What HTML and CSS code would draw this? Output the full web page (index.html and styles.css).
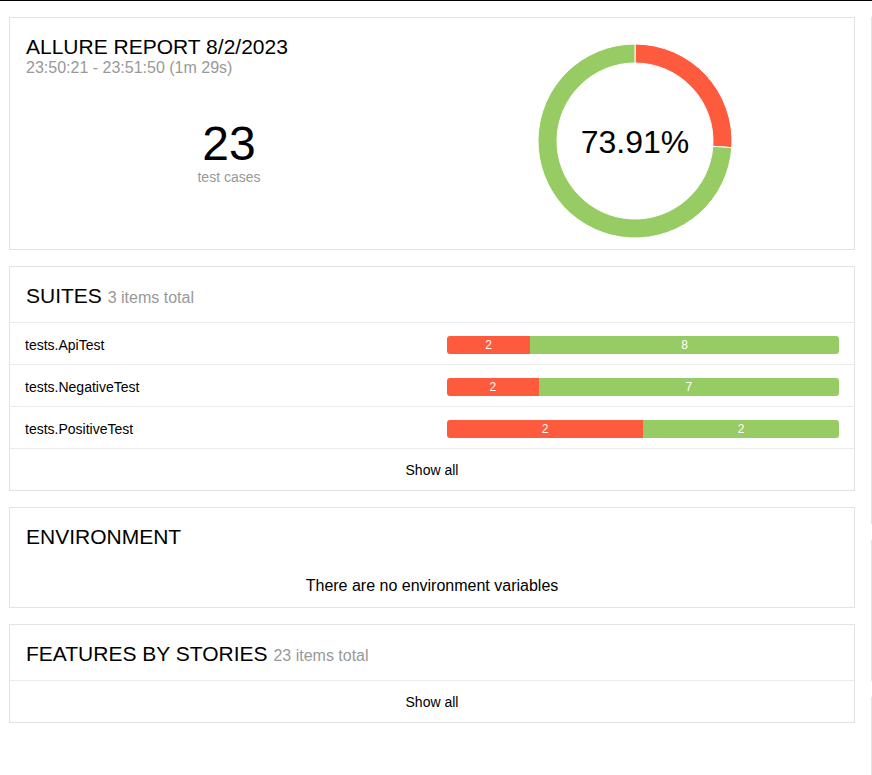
FILE: index.html
```html
<!DOCTYPE html>
<html lang="en">
<head>
<meta charset="utf-8">
<title>Allure Report</title>
<link rel="stylesheet" href="styles.css">
</head>
<body>
<div class="page">
  <div class="columns">
    <div class="column">
      <section class="card summary">
        <div class="summary-left">
          <h1 class="card-title">ALLURE REPORT 8/2/2023</h1>
          <div class="subtitle">23:50:21 - 23:51:50 (1m 29s)</div>
          <div class="stat">
            <div class="stat-num">23</div>
            <div class="stat-label">test cases</div>
          </div>
        </div>
        <div class="summary-right">
          <div class="donut">
            <svg width="194" height="194" viewBox="0 0 194 194">
              <path class="seg-failed" d="M97,0 A97,97 0 0,1 193.774,103.619 L174.818,102.323 A78,78 0 0,0 97,19 Z"/>
              <path class="seg-passed" d="M193.774,103.619 A97,97 0 1,1 97,0 L97,19 A78,78 0 1,0 174.818,102.323 Z"/>
            </svg>
            <div class="donut-label">73.91%</div>
          </div>
        </div>
      </section>

      <section class="card">
        <h2 class="card-title header-line">SUITES <span class="count">3 items total</span></h2>
        <div class="row">
          <div class="row-name">tests.ApiTest</div>
          <div class="bar">
            <div class="bar-seg failed" style="flex-grow:2">2</div>
            <div class="bar-seg passed" style="flex-grow:8">8</div>
          </div>
        </div>
        <div class="row">
          <div class="row-name">tests.NegativeTest</div>
          <div class="bar">
            <div class="bar-seg failed" style="flex-grow:2">2</div>
            <div class="bar-seg passed" style="flex-grow:7">7</div>
          </div>
        </div>
        <div class="row">
          <div class="row-name">tests.PositiveTest</div>
          <div class="bar">
            <div class="bar-seg failed" style="flex-grow:2">2</div>
            <div class="bar-seg passed" style="flex-grow:2">2</div>
          </div>
        </div>
        <div class="show-all">Show all</div>
      </section>

      <section class="card">
        <h2 class="card-title">ENVIRONMENT</h2>
        <div class="empty">There are no environment variables</div>
      </section>

      <section class="card">
        <h2 class="card-title header-line">FEATURES BY STORIES <span class="count">23 items total</span></h2>
        <div class="show-all">Show all</div>
      </section>
    </div>

    <div class="column">
      <section class="card side-a"></section>
      <section class="card side-b"></section>
      <section class="card side-c"></section>
    </div>
  </div>
</div>
</body>
</html>
```

FILE: styles.css
```css
html, body {
  margin: 0;
  padding: 0;
  background: #fff;
  overflow: hidden;
}

body {
  font-family: "Liberation Sans", Arial, sans-serif;
  font-size: 14px;
  color: #000;
}

.page {
  border-top: 1px solid #000;
}

.columns {
  display: flex;
  align-items: flex-start;
  gap: 16px;
  padding: 16px 0 0 9px;
  width: max-content;
}

.column {
  width: 846px;
  flex-shrink: 0;
  display: flex;
  flex-direction: column;
  gap: 16px;
}

.card {
  background: #fff;
  border: 1px solid #e3e3e3;
}

.card-title {
  margin: 0;
  font-size: 21px;
  font-weight: normal;
  line-height: 24px;
  height: 24px;
  padding: 17px 15px 14px 16px;
}

.header-line {
  border-bottom: 1px solid #ebebeb;
}

.count {
  font-size: 16px;
  line-height: 16px;
  color: #999;
}

/* summary */
.summary {
  display: flex;
  padding: 0 16px;
  height: 231px;
}

.summary-left,
.summary-right {
  width: 406px;
}

.summary-left .card-title {
  padding: 17px 0 0 0;
}

.subtitle {
  font-size: 16px;
  line-height: 18px;
  color: #999;
}

.stat {
  margin-top: 43px;
  text-align: center;
}

.stat-num {
  font-size: 48px;
  line-height: 48px;
}

.stat-label {
  font-size: 14px;
  line-height: 16px;
  margin-top: 1px;
  color: #999;
}

.summary-right {
  display: flex;
  justify-content: center;
  padding-top: 26px;
}

.donut {
  position: relative;
  width: 194px;
  height: 194px;
}

.donut svg {
  display: block;
}

.seg-failed {
  fill: #fd5a3e;
  stroke: #fff;
  stroke-width: 1;
}

.seg-passed {
  fill: #97cc64;
  stroke: #fff;
  stroke-width: 1;
}

.donut-label {
  position: absolute;
  inset: 0;
  display: flex;
  align-items: center;
  justify-content: center;
  font-size: 32px;
  padding-top: 2px;
}

/* rows */
.row {
  display: flex;
  align-items: center;
  height: 41px;
  padding: 0 15px;
  border-bottom: 1px solid #ebebeb;
}

.row-name {
  flex: 1;
  line-height: 16px;
  padding-top: 2px;
}

.bar {
  width: 392px;
  height: 18px;
  margin-top: 3px;
  display: flex;
  border-radius: 3px;
  overflow: hidden;
}

.bar-seg {
  flex-basis: 0;
  padding: 0 4px;
  color: #fff;
  font-size: 12px;
  line-height: 18px;
  text-align: center;
}

.bar-seg.failed {
  background: #fd5a3e;
}

.bar-seg.passed {
  background: #97cc64;
}

.show-all {
  height: 39px;
  padding-top: 2px;
  line-height: 39px;
  text-align: center;
}

.empty {
  font-size: 16px;
  line-height: 18px;
  text-align: center;
  padding: 14px 0 12px;
}

.side-a { height: 505px; }
.side-b { height: 139px; }
.side-c { height: 200px; }
```
